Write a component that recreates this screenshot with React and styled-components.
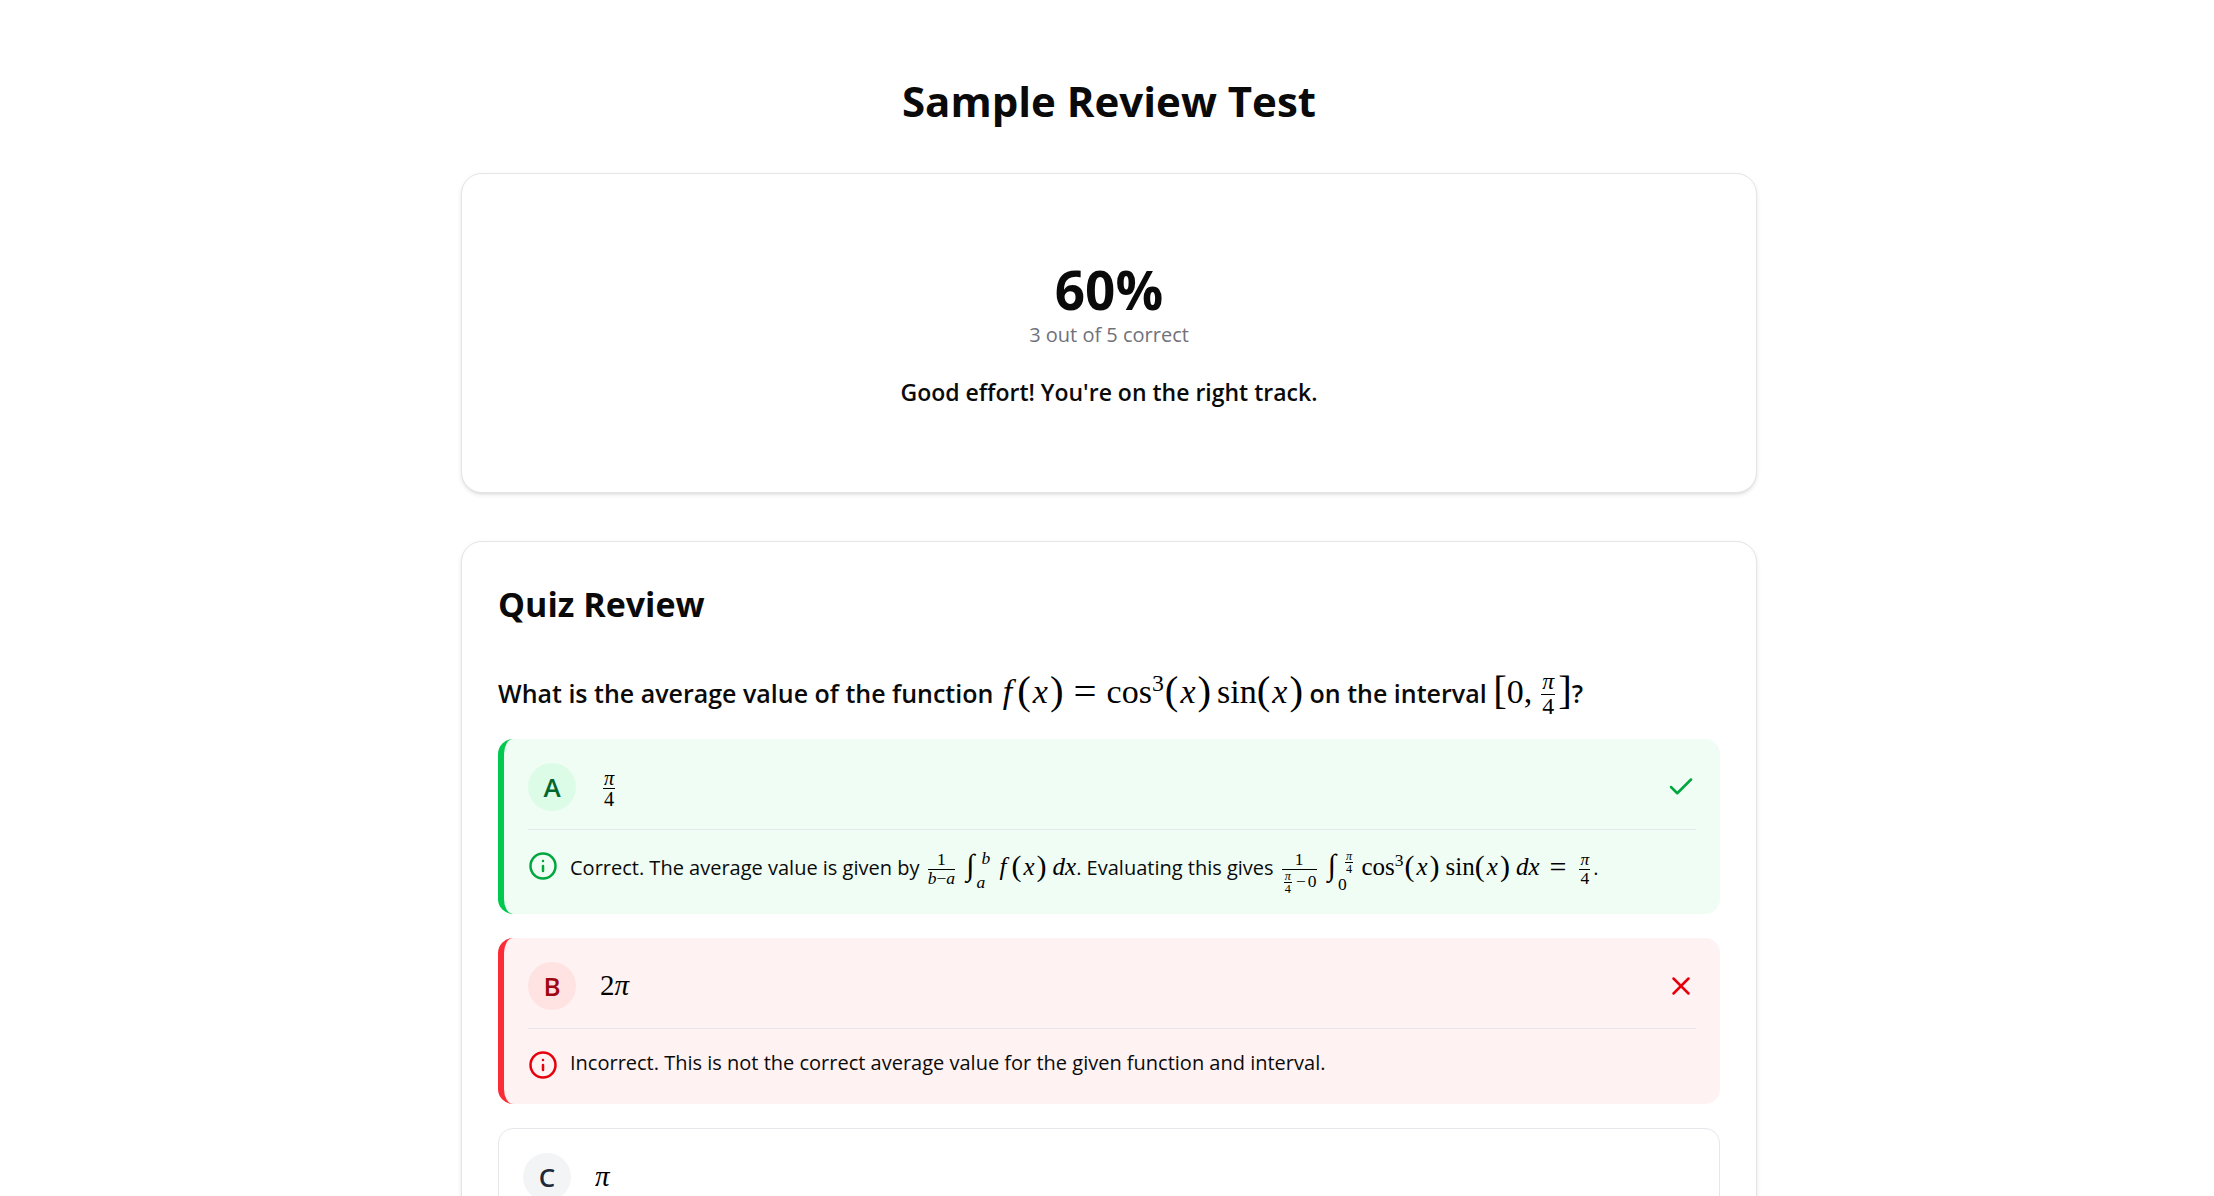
import React from "react";
import styled, { createGlobalStyle, css } from "styled-components";
import { Check, Info, X } from "lucide-react";

const GlobalStyle = createGlobalStyle`
  * {
    box-sizing: border-box;
  }
  body {
    margin: 0;
    background: #ffffff;
    color: #0a0a0a;
    font-family: "Segoe UI", "Open Sans", "Noto Sans", sans-serif;
  }
  h1, h2, h3, p, ul {
    margin: 0;
    padding: 0;
  }
`;

const tones = {
  correct: { bg: "#f0fdf4", bar: "#00c950", badge: "#dcfce7", letter: "#016630", icon: "#00a63e" },
  wrong: { bg: "#fef2f2", bar: "#fb2c36", badge: "#ffe2e2", letter: "#9f0712", icon: "#e7000b" },
  plain: { bg: "#ffffff", bar: "#e5e7eb", badge: "#f3f4f6", letter: "#1e2939", icon: "#6a7282" },
};

const Page = styled.main`
  padding: 71px 24px 48px 28px;
`;

const Container = styled.div`
  max-width: 1296px;
  margin: 0 auto;
`;

const PageTitle = styled.h1`
  font-size: 42px;
  line-height: 60px;
  font-weight: 700;
  text-align: center;
  margin-bottom: 42px;
`;

const Card = styled.section`
  border: 1px solid #e5e5e5;
  border-radius: 21px;
  background: #ffffff;
  box-shadow: 0 2px 4px rgba(0, 0, 0, 0.1), 0 2px 3px -2px rgba(0, 0, 0, 0.1);
  padding: 36px;
  margin-bottom: 48px;
`;

const ScoreCard = styled(Card)`
  display: flex;
  flex-direction: column;
  align-items: center;
  padding: 86px 36px 82px;
`;

const Score = styled.div`
  font-size: 53px;
  line-height: 60px;
  font-weight: 700;
`;

const ScoreDetail = styled.p`
  font-size: 20px;
  line-height: 30px;
  color: #71717b;
`;

const ScoreMessage = styled.p`
  font-size: 23px;
  line-height: 36px;
  font-weight: 600;
  margin-top: 24px;
`;

const SectionTitle = styled.h2`
  font-size: 34px;
  line-height: 52px;
  font-weight: 700;
  margin-bottom: 39px;
`;

const Question = styled.h3`
  font-size: 25px;
  line-height: 48px;
  font-weight: 600;
  margin-bottom: 22px;
`;

const Options = styled.ul`
  list-style: none;
  display: flex;
  flex-direction: column;
  gap: 24px;
`;

const Option = styled.li`
  padding: 24px;
  border-radius: 15px;
  background: ${(props) => tones[props.$tone].bg};
  ${(props) =>
    props.$tone === "plain"
      ? css`
          border: 1px solid ${tones.plain.bar};
        `
      : css`
          border-left: 6px solid ${tones[props.$tone].bar};
        `}
`;

const OptionHead = styled.div`
  display: flex;
  align-items: center;
  gap: 24px;
`;

const Letter = styled.span`
  width: 48px;
  height: 48px;
  flex-shrink: 0;
  border-radius: 50%;
  display: flex;
  align-items: center;
  justify-content: center;
  font-size: 26px;
  font-weight: 600;
  background: ${(props) => tones[props.$tone].badge};
  color: ${(props) => tones[props.$tone].letter};
`;

const Answer = styled.div`
  flex: 1;
  line-height: 36px;
  padding-top: 6px;
`;

const Mark = styled.span`
  display: flex;
  color: ${(props) => tones[props.$tone].icon};
`;

const Explanation = styled.div`
  display: flex;
  align-items: flex-start;
  gap: 12px;
  margin-top: 18px;
  padding-top: 18px;
  border-top: 1px solid #e5e7eb;
  font-size: 20px;
  line-height: 30px;
`;

const ExplanationText = styled.p`
  padding-top: 1px;
`;

const InfoMark = styled(Mark)`
  padding-top: 3px;
`;

/* math */
const Math = styled.span`
  font-family: "Liberation Serif", serif;
  font-size: ${(props) => props.$size}px;
  line-height: 1;
  font-weight: 400;
  color: #000000;
  white-space: nowrap;
`;

const Var = styled.i``;

const Arg = styled.i`
  padding: 0 2px;
`;

const Func = styled.i`
  padding: 0 5px 0 3px;
`;

const Rel = styled.span`
  font-size: 120%;
  line-height: 0;
  vertical-align: -2px;
  margin: 0 10px;
`;

const Minus = styled.span`
  padding: 0 2px;
`;

const Thin = styled.span`
  margin-left: 6px;
`;

const Delim = styled.span`
  font-size: 120%;
  line-height: 0;
  vertical-align: -1px;
`;

const Power = styled.span`
  font-size: 70%;
  line-height: 0;
  vertical-align: ${(props) => props.$rise}px;
  padding-right: 1px;
`;

const FracBox = styled.span`
  display: inline-grid;
  grid-template-rows: 1fr 1fr;
  text-align: center;
  vertical-align: middle;
  font-size: 70%;
  line-height: 1;
  margin: ${(props) => (props.$small ? "0 2px" : "-6px 3px")};
`;

const Top = styled.span`
  align-self: end;
  padding: 0 1px;
  border-bottom: 1px solid currentColor;
`;

const Limits = styled.span`
  display: inline-grid;
  align-content: space-between;
  height: 40px;
  margin: -6px 0;
  vertical-align: middle;
  font-size: 70%;
  line-height: 16px;
`;

const Upper = styled.span`
  padding-left: 5px;
`;

const Lower = styled.span``;

const Sign = styled.i`
  font-size: 120%;
  line-height: 0;
  margin: 0 2px;
`;

const Frac = ({ top, bottom, small }) => (
  <FracBox $small={small}>
    <Top>{top}</Top>
    <span>{bottom}</span>
  </FracBox>
);

const Call = () => (
  <>
    <Delim>(</Delim>
    <Arg>x</Arg>
    <Delim>)</Delim>
  </>
);

const Integral = ({ from, to }) => (
  <>
    <Sign>∫</Sign>
    <Limits>
      <Upper>{to}</Upper>
      <Lower>{from}</Lower>
    </Limits>
  </>
);

const PiOverFour = ({ small }) => <Frac small={small} top={<Var>π</Var>} bottom="4" />;

const Integrand = ({ rise }) => (
  <>
    cos<Power $rise={rise}>3</Power>
    <Call />
    <Thin>sin</Thin>
    <Call />
  </>
);

const AnswerOption = ({ letter, tone, answer, children }) => (
  <Option $tone={tone}>
    <OptionHead>
      <Letter $tone={tone}>{letter}</Letter>
      <Answer>
        <Math $size={29}>{answer}</Math>
      </Answer>
      {tone !== "plain" && (
        <Mark $tone={tone}>
          {tone === "correct" ? <Check size={30} /> : <X size={30} />}
        </Mark>
      )}
    </OptionHead>
    {children && (
      <Explanation>
        <InfoMark $tone={tone}>
          <Info size={30} />
        </InfoMark>
        <ExplanationText>{children}</ExplanationText>
      </Explanation>
    )}
  </Option>
);

const App = () => {
  return (
    <Page>
      <GlobalStyle />
      <Container>
        <PageTitle>Sample Review Test</PageTitle>
        <ScoreCard>
          <Score>60%</Score>
          <ScoreDetail>3 out of 5 correct</ScoreDetail>
          <ScoreMessage>Good effort! You're on the right track.</ScoreMessage>
        </ScoreCard>
        <Card>
          <SectionTitle>Quiz Review</SectionTitle>
          <Question>
            What is the average value of the function{" "}
            <Math $size={34}>
              <Func>f</Func>
              <Call />
              <Rel>=</Rel>
              <Integrand rise={12} />
            </Math>{" "}
            on the interval{" "}
            <Math $size={34}>
              <Delim>[</Delim>0,
              <Thin>
                <PiOverFour />
              </Thin>
              <Delim>]</Delim>
            </Math>
            ?
          </Question>
          <Options>
            <AnswerOption letter="A" tone="correct" answer={<PiOverFour />}>
              Correct. The average value is given by{" "}
              <Math $size={25}>
                <Frac
                  top="1"
                  bottom={
                    <>
                      <Var>b</Var>−<Var>a</Var>
                    </>
                  }
                />{" "}
                <Integral from={<Var>a</Var>} to={<Var>b</Var>} />{" "}
                <Func>f</Func>
                <Call />
                <Thin>
                  <Var>dx</Var>
                </Thin>
              </Math>
              . Evaluating this gives{" "}
              <Math $size={25}>
                <Frac
                  top="1"
                  bottom={
                    <>
                      <PiOverFour small />
                      <Minus>−</Minus>0
                    </>
                  }
                />{" "}
                <Integral from="0" to={<PiOverFour small />} />{" "}
                <Integrand rise={9} />
                <Thin>
                  <Var>dx</Var>
                </Thin>
                <Rel>=</Rel>
                <PiOverFour />
              </Math>
              .
            </AnswerOption>
            <AnswerOption
              letter="B"
              tone="wrong"
              answer={
                <>
                  2<Var>π</Var>
                </>
              }
            >
              Incorrect. This is not the correct average value for the given function and interval.
            </AnswerOption>
            <AnswerOption letter="C" tone="plain" answer={<Var>π</Var>} />
          </Options>
        </Card>
      </Container>
    </Page>
  );
};

export default App;
